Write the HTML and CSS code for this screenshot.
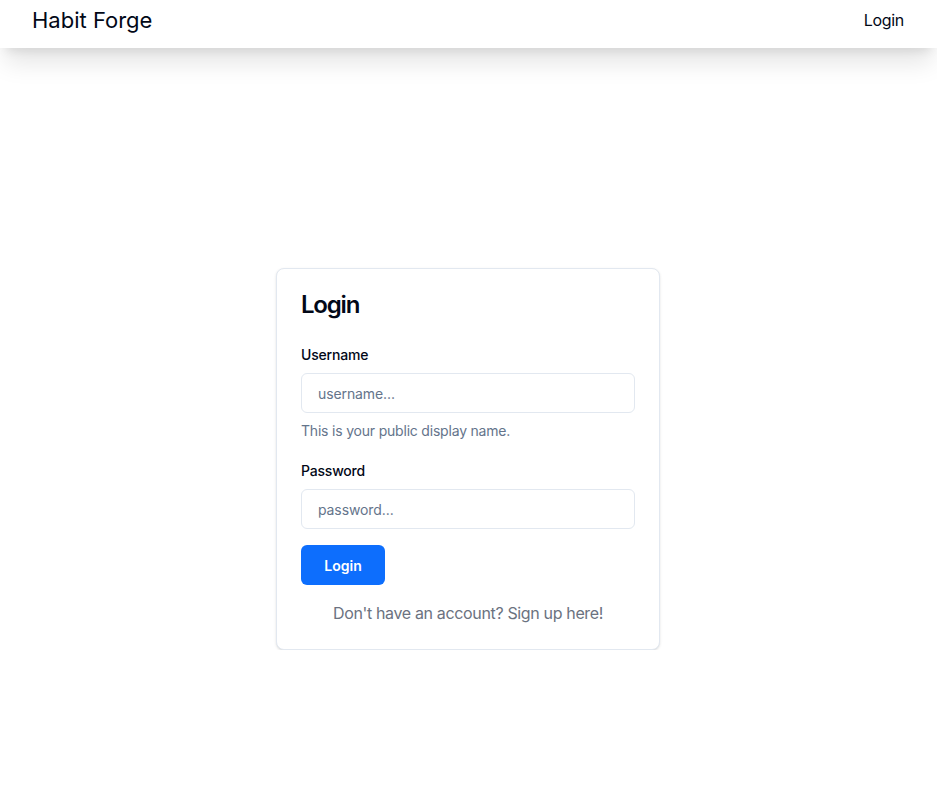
FILE: index.html
```html
<!DOCTYPE html>
<html lang="en">
<head>
<meta charset="utf-8">
<title>Habit Forge</title>
<link rel="stylesheet" href="styles.css">
</head>
<body>
<header class="topbar">
  <span class="brand">Habit Forge</span>
  <a class="nav-link" href="#">Login</a>
</header>
<main class="main">
  <section class="card">
    <h1 class="card-title">Login</h1>
    <form class="form">
      <div class="field">
        <label class="label" for="username">Username</label>
        <input class="input" id="username" type="text" placeholder="username...">
        <p class="hint">This is your public display name.</p>
      </div>
      <div class="field">
        <label class="label" for="password">Password</label>
        <input class="input" id="password" type="password" placeholder="password...">
      </div>
      <button class="btn" type="button">Login</button>
      <p class="footer-text">Don't have an account? Sign up here!</p>
    </form>
  </section>
</main>
</body>
</html>
```
FILE: styles.css
```css
* { box-sizing: border-box; }
html, body { margin: 0; padding: 0; }
body {
  font-family: Inter, "Noto Sans", sans-serif;
  color: #020817;
  background: #fff;
}
.topbar {
  height: 48px;
  display: flex;
  align-items: flex-start;
  justify-content: space-between;
  padding: 4px 33px 0 32px;
  background: #fff;
  box-shadow: 0 20px 25px -5px rgba(0,0,0,0.1), 0 8px 10px -6px rgba(0,0,0,0.1);
  position: relative;
  z-index: 1;
}
.brand {
  font-size: 22px;
  line-height: 32px;
  color: #020817;
}
.nav-link {
  font-size: 16px;
  line-height: 32px;
  color: #020817;
  text-decoration: none;
  letter-spacing: -0.3px;
}
.main {
  display: flex;
  justify-content: center;
  padding-top: 220px;
  padding-right: 1px;
}
.card {
  width: 384px;
  border: 1px solid #e2e8f0;
  border-radius: 8px;
  box-shadow: 0 1px 3px 0 rgba(0,0,0,0.1), 0 1px 2px -1px rgba(0,0,0,0.1);
  padding: 24px;
  background: #fff;
}
.card-title {
  margin: 0;
  font-size: 24px;
  line-height: 24px;
  font-weight: 600;
  letter-spacing: -1.2px;
}
.form {
  display: flex;
  flex-direction: column;
  margin-top: 28px;
}
.field {
  display: flex;
  flex-direction: column;
  gap: 8px;
  margin-bottom: 20px;
}
.field + .field { margin-bottom: 16px; }
.label {
  font-size: 14px;
  line-height: 20px;
  font-weight: 500;
  letter-spacing: -0.2px;
}
.input {
  height: 40px;
  width: 100%;
  border: 1px solid #e2e8f0;
  border-radius: 6px;
  padding: 0 16px;
  font-family: inherit;
  font-size: 14px;
  color: #020817;
  background: #fff;
  outline: none;
  letter-spacing: -0.1px;
}
.input::placeholder { color: #64748b; }
.hint {
  margin: 0;
  font-size: 14px;
  line-height: 20px;
  color: #64748b;
  letter-spacing: -0.2px;
}
.btn {
  align-self: flex-start;
  width: 84px;
  height: 40px;
  padding: 0;
  border: none;
  border-radius: 6px;
  background: #0d6efd;
  color: #fff;
  font-family: inherit;
  font-size: 14px;
  font-weight: 600;
}
.footer-text {
  margin: 16px 0 0;
  text-align: center;
  font-size: 16px;
  line-height: 24px;
  color: #6b7280;
  letter-spacing: -0.35px;
}
```
